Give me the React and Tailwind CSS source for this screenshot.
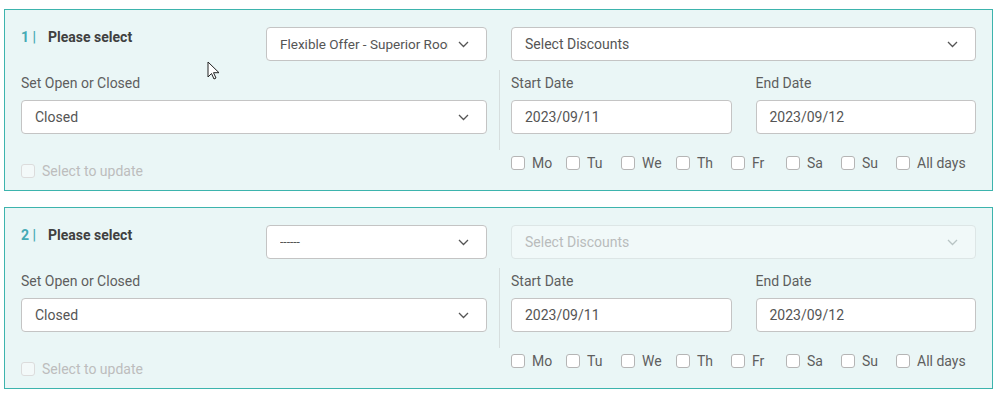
import React from 'react';

const font = { fontFamily: 'Roboto, "Liberation Sans", sans-serif' };

const Chevron = ({ disabled = false }) => (
    <svg
        width="11"
        height="7"
        viewBox="0 0 11 7"
        fill="none"
        className={disabled ? 'text-[#b8c4c4]' : 'text-[#555]'}
    >
        <path d="M1 1l4.5 4.5L10 1" stroke="currentColor" strokeWidth="1.3" />
    </svg>
);

const Select = ({ value, className = '', disabled = false, textClass = '' }) => (
    <div
        className={`h-[34px] flex items-center justify-between pl-[13px] pr-[17px] rounded-[4px] border ${disabled ? 'bg-[#f1f9f9] border-[#dde6e6]' : 'bg-white border-[#c4c4c4]'
            } ${className}`}
    >
        <span
            className={`overflow-hidden whitespace-nowrap ${disabled ? 'text-[#b9bcbc]' : 'text-[#555]'
                } ${textClass || 'text-[14px]'}`}
        >
            {value}
        </span>
        <Chevron disabled={disabled} />
    </div>
);

const Checkbox = ({ label, disabled = false }) => (
    <label className="flex items-center gap-[7px] h-5 whitespace-nowrap">
        <span
            className={`w-[14px] h-[14px] shrink-0 rounded-[3px] border ${disabled ? 'border-[#dcdcdc] bg-[#f3f9f9]' : 'border-[#b5b5b5] bg-white'
                }`}
        />
        <span className={`text-[14px] ${disabled ? 'text-[#bdbdbd]' : 'text-[#5e5e5e]'}`}>{label}</span>
    </label>
);

const days = ['Mo', 'Tu', 'We', 'Th', 'Fr', 'Sa', 'Su', 'All days'];

const RuleCard = ({ index, offer, offerIsDash = false, discountsDisabled = false }) => (
    <div className="border border-[#3db4ad] bg-[#eaf6f6] px-4 pt-[17px] pb-[9px]">
        {/* top row */}
        <div className="flex">
            <div className="w-[466px] flex justify-between">
                <div className="flex items-center gap-3 h-5 text-[14px]">
                    <span className="font-bold text-[#45aab4]">{index} |</span>
                    <span className="font-bold text-[#404040]">Please select</span>
                </div>
                <Select
                    value={offer}
                    className="w-[221px]"
                    textClass={offerIsDash ? 'text-[#222] text-[12px] w-[150px]' : 'text-[13.5px] w-[168px]'}
                />
            </div>
            <Select
                value="Select Discounts"
                className="ml-6 w-[465px]"
                disabled={discountsDisabled}
            />
        </div>

        {/* body */}
        <div className="flex mt-[9px]">
            <div className="w-[466px] flex flex-col">
                <div className="text-[14px] text-[#5e5e5e] leading-5 mt-[3px]">Set Open or Closed</div>
                <Select value="Closed" className="w-full mt-[7px]" />
                <div className="mt-[27px]">
                    <Checkbox label="Select to update" disabled />
                </div>
            </div>
            <div className="flex-1 ml-3 flex flex-col">
                <div className="border-l border-[#d6dede] pl-[11px] pb-4 flex gap-6">
                    {['Start Date', 'End Date'].map((lbl, i) => (
                        <div key={lbl} className="flex-1 flex flex-col">
                            <div className="text-[14px] text-[#5e5e5e] leading-5 mt-[3px]">{lbl}</div>
                            <div className="mt-[7px] h-[34px] flex items-center px-[13px] rounded-[4px] border border-[#c4c4c4] bg-white text-[14px] text-[#555]">
                                {i === 0 ? '2023/09/11' : '2023/09/12'}
                            </div>
                        </div>
                    ))}
                </div>
                <div className="flex pl-3 mt-[3px]">
                    {days.map((d) => (
                        <div key={d} className="w-[55px] shrink-0">
                            <Checkbox label={d} />
                        </div>
                    ))}
                </div>
            </div>
        </div>
    </div>
);

const Cursor = () => (
    <svg
        width="13"
        height="20"
        viewBox="0 0 13 20"
        className="absolute left-[207px] top-[61px]"
    >
        <path
            d="M1 1v15l3.5-3.5 2.5 5.5 2-1-2.5-5.3H12z"
            fill="white"
            stroke="#222"
            strokeWidth="1"
            strokeLinejoin="round"
        />
    </svg>
);

export default function App() {
    return (
        <div className="relative bg-white w-[998px] h-[395px] pt-[9px] pl-1 pr-[5px]" style={font}>
            <div className="flex flex-col gap-4">
                <RuleCard index={1} offer="Flexible Offer - Superior Room" />
                <RuleCard index={2} offer="------" offerIsDash discountsDisabled />
            </div>
            <Cursor />
        </div>
    );
}
